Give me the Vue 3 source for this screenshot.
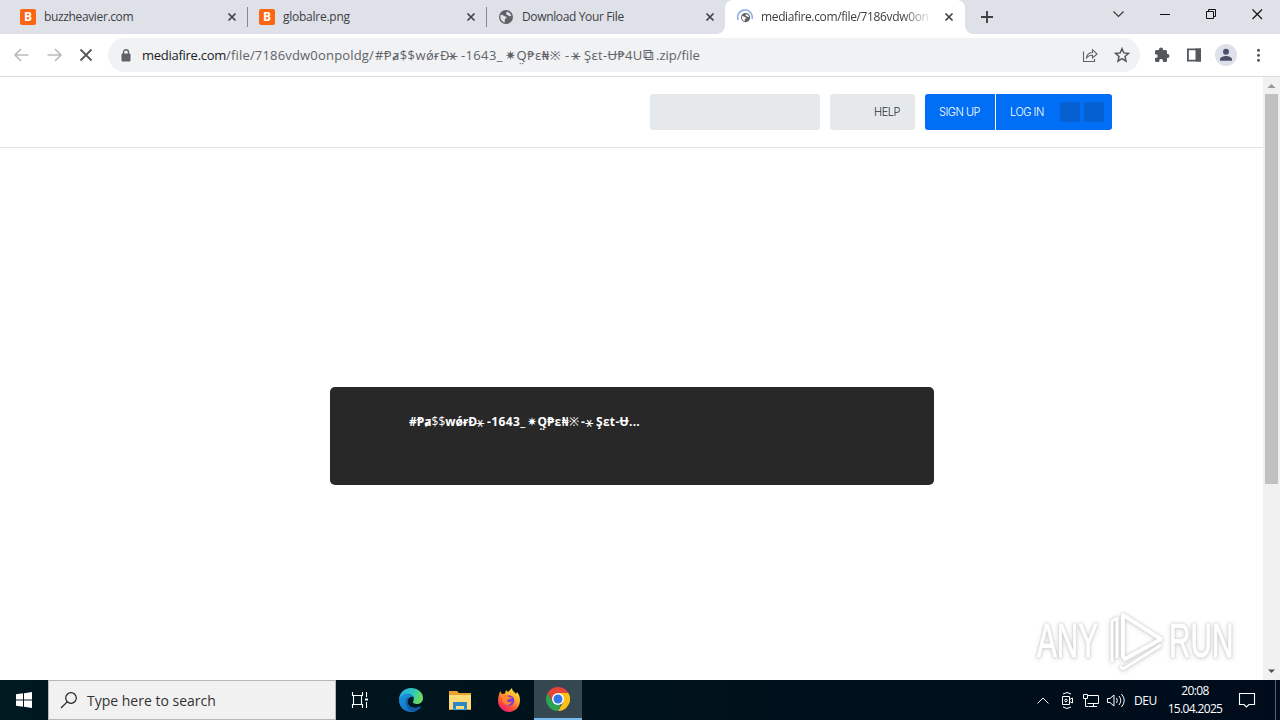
<script setup>
const tabs = [
  { title: 'buzzheavier.com', icon: 'b', cls: 't1' },
  { title: 'globalre.png', icon: 'b', cls: 't2' },
  { title: 'Download Your File', icon: 'globe', cls: 't3' },
  { title: 'mediafire.com/file/7186vdw0on', icon: 'load', cls: 't4' },
]
const globe = 'M8 1a7 7 0 1 0 0 14A7 7 0 0 0 8 1zM3 5.500c1 .2 2 .5 2.800 1.300.8.9 2.600.2 2.800 1.700.1 1.200-1.600 1-1.800 2.200-.1.900.2 1.800-.4 2.700A5.600 5.600 0 0 1 3 5.500zM9 2.600l3 1.700 1.300 2.400c-1 .8-2.300.4-3-.3-.8-.7-2.200-.6-2.300-1.600 0-.9.800-1.200 1-2.200z'
</script>

<template>
  <div class="screen">
    <div class="tabs">
      <div v-for="t in tabs" :key="t.title" class="tab" :class="t.cls">
        <span v-if="t.icon === 'b'" class="bicon">B</span>
        <svg v-else class="fav" viewBox="0 0 16 16">
          <path v-if="t.icon === 'globe'" :d="globe" fill="#5f6368" fill-rule="evenodd" />
          <g v-else>
            <path d="M1.200 11A7.300 7.300 0 1 1 15 10" fill="none" stroke="#8aaae5" stroke-width="1.500" />
            <path :d="globe" transform="translate(3.300 3.300) scale(.66)" fill="#5f6368" fill-rule="evenodd" />
          </g>
        </svg>
        <span class="title">{{ t.title }}</span>
        <svg class="close" viewBox="0 0 10 10"><path d="M1.500 1.500l7 7m0-7l-7 7" stroke="#3f4349" stroke-width="1.700" /></svg>
      </div>
      <svg class="plus" viewBox="0 0 14 14"><path d="M7 1v12M1 7h12" stroke="#3c4043" stroke-width="1.900" /></svg>
      <svg class="winctl" viewBox="0 0 160 34" fill="none" stroke="#111">
        <path d="M13.500 11.500l5 5 5-5" stroke="#333" stroke-width="1.100" />
        <path d="M60 14.500h10" />
        <path d="M106.500 11.500h7v7h-7zM108.500 11v-1.500h7v7H114" />
        <path d="M152.500 9.500l9.500 9.500m0-9.500L152.500 19" stroke-width="1.200" />
      </svg>
    </div>

    <div class="toolbar">
      <svg class="nav" viewBox="0 0 108 42" fill="none">
        <path d="M28.500 21H15.500M21 15l-6 6 6 6M47.500 21h13M55 15l6 6-6 6" stroke="#b9bbbe" stroke-width="1.700" />
        <path d="M80.500 15.500l11 11m0-11l-11 11" stroke="#54585c" stroke-width="1.800" />
      </svg>
      <div class="omni">
        <svg class="lock" viewBox="0 0 10 13"><path d="M1 5h8v7H1z" fill="#5f6368" stroke="#5f6368" stroke-linejoin="round" /><path d="M2.500 5V3.300a2.500 2.500 0 0 1 5 0V5" fill="none" stroke="#5f6368" stroke-width="1.400" /></svg>
        <div class="url">
          <span class="host">mediafire.com</span><span class="p1">/file/7186vdw0onpoldg/</span><span class="p2">#Ᵽⱥ$$wǿɍÐ</span><span class="ast">⚹</span><span class="p3">-1643_</span><span class="p4">✷Q̤₱ɛ₦※</span><span class="dash">-</span><span class="ast">⚹</span><span class="p5">Şɛt-Ʉ₱4U</span><span class="sq">⧉</span><span class="p6">.zip/file</span>
        </div>
        <svg class="share" viewBox="0 0 16 16" fill="none" stroke="#5f6368" stroke-width="1.100"><path d="M1.500 4.500v10h11v-2.500M4.500 11c.2-3.300 2.300-5.300 6-5.500V2.700L15 7l-4.500 4V8.300c-2.800 0-4.500.8-6 2.700z" /></svg>
        <svg class="star" viewBox="0 0 16 16"><path d="M8 1.700l1.800 4.200 4.700.5-3.500 3.100 1 4.600L8 11.700l-4 2.400 1-4.600-3.500-3.100 4.700-.5z" fill="none" stroke="#54585c" stroke-width="1.500" /></svg>
      </div>
      <svg class="ext" viewBox="0 0 108 42">
        <path d="M2 17.500q0-1.500 1.500-1.500H6v-.5a2 2 0 0 1 4 0v.5h2.500q1.500 0 1.500 1.500V20h.5a2 2 0 0 1 0 4H14v2.500q0 1.500-1.500 1.500H10v-1a1.900 1.900 0 0 0-3.800 0v1H3.500Q2 28 2 26.500V24h.8a1.900 1.900 0 0 0 0-3.800H2z" transform="translate(1 0)" fill="#54585c" />
        <path d="M35.900 15.400h12.200v11.200H35.900z" fill="none" stroke="#54585c" stroke-width="1.800" /><path d="M43.500 14.500H49v13h-5.500z" fill="#54585c" />
        <circle cx="74" cy="21" r="11" fill="#dee1e9" /><circle cx="74" cy="17.800" r="3" fill="#4b5069" /><path d="M68 26.800v-1.500c0-2 3.500-3.300 6-3.300s6 1.300 6 3.300v1.500z" fill="#4b5069" />
        <g fill="#54585c"><circle cx="106.500" cy="16.300" r="1.500" /><circle cx="106.500" cy="21.300" r="1.500" /><circle cx="106.500" cy="26.300" r="1.500" /></g>
      </svg>
    </div>

    <div class="content">
      <div class="page">
        <header>
          <div class="search"></div>
          <div class="help"><span>HELP</span></div>
          <div class="auth"><div class="signup"><span>SIGN UP</span></div><div class="login"><span>LOG IN</span><i></i><i></i></div></div>
        </header>
        <div class="card">
          <div class="file"><span class="f1">#Ᵽⱥ<b>$$</b>wǿɍÐ</span><span class="fa">⚹</span><span class="f2">-1643_</span><span class="f3">✷Q̤₱ɛ₦<b>※</b></span><span class="fd">-</span><span class="fa">⚹</span><span class="f4">Şɛt-Ʉ...</span></div>
        </div>
        <div class="mark">
          <span class="any">ANY</span>
          <svg viewBox="0 0 60 66" fill="none" stroke="#fff" stroke-width="4" stroke-linejoin="round">
            <path d="M6 54V13l5-3v40" stroke-width="3" />
            <path d="M17 50V7l38 24-38 21" />
            <path d="M14 58l3 3 38-24" stroke-width="3" />
          </svg>
          <span class="run">RUN</span>
        </div>
      </div>
      <div class="scroll">
        <svg viewBox="0 0 17 17"><path d="M4.500 11l4-4 4 4z" fill="#999" /></svg>
        <div class="thumb"></div>
        <svg class="down" viewBox="0 0 17 17"><path d="M5 6.500h7L8.500 10z" fill="#505050" /></svg>
      </div>
    </div>

    <div class="taskbar">
      <div class="start"><svg viewBox="0 0 16 16" fill="#fff"><path d="M0 2.200l7-.9v6.200H0zM8 1.200L16 0v7.500H8zM0 8.500h7v6.200l-7-.9zM8 8.500h8V16l-8-1.200z" /></svg></div>
      <div class="find"><svg viewBox="0 0 18 18" fill="none" stroke="#222" stroke-width="1.200"><circle cx="11" cy="7" r="5.300" /><path d="M7.200 10.800L1 17" /></svg><span>Type here to search</span></div>
      <div class="app"><svg viewBox="0 0 24 24" fill="none" stroke="#fff" stroke-width="1.100"><path d="M4.500 4v3.500h10V4M4.500 20v-3.500h10V20M5.500 7.500v9m8-9v9M18.500 4v5m0 5v6" /><path d="M17 10.500h3v2h-3z" fill="#fff" stroke="none" /></svg></div>
      <div class="app edge"><svg viewBox="0 0 24 24">
        <defs><linearGradient id="ea" x1="0" x2="1" y1="0" y2=".3"><stop offset="0" stop-color="#28a7e8" /><stop offset=".6" stop-color="#2bc6bd" /><stop offset="1" stop-color="#69dc61" /></linearGradient><linearGradient id="eb" x1="0" y1="0" x2="1" y2="1"><stop stop-color="#1998df" /><stop offset="1" stop-color="#0d61b3" /></linearGradient></defs>
        <path d="M0 12C0 5 5 0 12 0c7 0 12 4.500 12 10 0 4-3 6-6.500 6-3 0-4-1-3.500-2 1.500-2.500-.5-6.500-5-6.500-4 0-7.500 2-9 4.500z" fill="url(#ea)" />
        <path d="M0 12c1-4 4.500-6.500 8.500-6.500 3.500 0 6 2 6.500 4.500-4-1.500-6.500 1-6.500 4 0 4 5 6.500 9.500 5.500l4-1.500C20 22 16 24 12 24 5 24 0 19 0 12z" fill="url(#eb)" />
        <path d="M8 10c-3 4 0 11 5 13.500 4 .1 7.500-2 9.500-5-6 3.500-14 .5-14-5 0-1.500.5-2.600 1-3.500z" fill="#105aa5" />
        <path d="M14.500 9c-3.500-1-5.500 1.500-5.500 4.500 0 2.500 2 4.500 5 5.300 3 .7 6 .2 8-.8l.8-2.300c-2.500 1-7 .8-8.800-.7-.8-.7-.3-1.300.1-2.200.6-1.300.7-2.600.4-3.800z" fill="#001821" />
      </svg></div>
      <div class="app"><svg viewBox="0 0 24 24"><path d="M1 3h8l2 2h12v17H1z" fill="#e9a22d" /><path d="M1 7h22v14H1z" fill="#ffdc78" /><path d="M5 14h14v8h-3v-4H8v4H5z" fill="#2d87c5" /><path d="M4 21h16v1H4z" fill="#42a0db" /></svg></div>
      <div class="app"><svg viewBox="0 0 24 24">
        <defs><linearGradient id="fx" x1=".9" y1="0" x2=".3" y2="1"><stop offset="0" stop-color="#fff04a" /><stop offset=".4" stop-color="#ffad28" /><stop offset=".75" stop-color="#ff493e" /><stop offset="1" stop-color="#e91d76" /></linearGradient></defs>
        <path d="M3 3l2 3 3-.5L9 2l2 2 4-4c0 3 3 4 4 6l1-2c2 2 3 5 3 8.500C23 19 18 24 12 24S1 19 1 13c0-4 1-6 2-10z" fill="url(#fx)" /><circle cx="12" cy="12.500" r="5.300" fill="#803bd7" /><path d="M4 8c3-2 6-1 8 1l3 .5c-1 2-5 1-5 4 2 1 4 1 5-.5-1 5-7 5-9 1-1-2-1-4-2-6z" fill="#ff842b" />
      </svg></div>
      <div class="app active"><svg viewBox="0 0 24 24"><path d="M12 12V6h10.400A12 12 0 0 1 12 24l5.200-9z" fill="#fbc116" /><path d="M1.600 6l5.200 9 5.200 3 3-.5L12 24A12 12 0 0 1 1.600 6z" fill="#2fa152" /><path d="M12 6h10.400A12 12 0 0 0 1.600 6l5.200 9z" fill="#e64435" /><circle cx="12" cy="12" r="6" fill="#fff" /><circle cx="12" cy="12" r="4.500" fill="#3377e7" /></svg></div>
      <svg class="tray" viewBox="0 0 100 40" fill="none" stroke="#fff" stroke-width="1">
        <path d="M6.500 23.500L12 18l5.500 5.500" />
        <path d="M31.500 16.500h7v8h-7zM38.500 19.500l3-1.500v5l-3-1.500M32 14q4-3 8 0M32 27q4 3 8 0" /><circle cx="35" cy="20.500" r="1.300" />
        <path d="M56.500 15.500h11v8h-11M62.500 23.500v3M58 26.500h8M52.500 14.500h4v4h-4zM54.500 18.500v8h3" />
        <path d="M76.500 18.500H79l4-3.500v11l-4-3.500h-2.500zM85.500 18q1.700 2.500 0 5M88 16q3.500 4.500 0 9M90.500 14q5.500 6.500 0 13" />
      </svg>
      <span class="lang">DEU</span>
      <div class="clock"><span>20:08</span><span class="date">15.04.2025</span></div>
      <svg class="note" viewBox="0 0 18 18" fill="none" stroke="#fff" stroke-width="1.100"><path d="M1.500 2.500h15v11H11l-2.500 2.500L6 13.500H1.500z" /></svg>
    </div>
  </div>
</template>

<style>
body { margin: 0; overflow: hidden; }
</style>
<style scoped>
* { box-sizing: border-box; }
.screen { width: 1280px; height: 720px; display: flex; flex-direction: column; overflow: hidden; background: #fff; font-family: "Open Sans", "Noto Sans", "DejaVu Sans", sans-serif; }
svg { display: block; flex: none; }
span { white-space: pre; }
.tabs { height: 34px; background: #dee1e8; display: flex; flex: none; }
.tab { width: 239px; height: 34px; display: flex; align-items: center; padding: 0 11px 0 11px; position: relative; }
.t1 { width: 248px; padding-left: 20px; }
.t1::after, .t2::after { content: ""; position: absolute; right: 0; top: 7px; width: 1px; height: 20px; background: #85888e; }
.t3 { width: 238px; padding-right: 10px; }
.t4 { width: 240px; background: #fff; border-radius: 8px 8px 0 0; padding-left: 12px; }
.t4::before, .t4::after { content: ""; position: absolute; bottom: 0; width: 8px; height: 8px; }
.t4::before { left: -8px; background: radial-gradient(circle at 0 0, transparent 7.5px, #fff 8px); }
.t4::after { right: -8px; background: radial-gradient(circle at 100% 0, transparent 7.5px, #fff 8px); }
.bicon { width: 16px; height: 16px; background: #fb6510; border-radius: 2px; color: #fff; font: bold 12px/16px "Open Sans", sans-serif; text-align: center; }
.fav { width: 16px; height: 16px; }
.title { margin-left: 8px; flex: 1; font-size: 12px; line-height: 18px; color: #3c4043; letter-spacing: -.36px; }
.t2 .title { letter-spacing: -.25px; }
.t4 .title { flex: none; width: 170px; margin-right: 13px; letter-spacing: -.36px; -webkit-mask-image: linear-gradient(90deg, #000 140px, transparent 172px); mask-image: linear-gradient(90deg, #000 140px, transparent 172px); }
.close { width: 10px; height: 10px; }
.plus { width: 14px; height: 14px; margin: 10px 0 0 15px; }
.winctl { width: 160px; height: 34px; margin-left: 106px; overflow: visible; }
.toolbar { height: 43px; flex: none; display: flex; border-bottom: 1px solid #dadce0; }
.nav { width: 108px; height: 42px; }
.omni { width: 1032px; height: 34px; margin-top: 4px; border-radius: 17px; background: #f0f2f4; display: flex; align-items: center; padding-left: 13px; }
.lock { width: 10px; height: 13px; }
.url { display: flex; margin-left: 11px; width: 930px; font-size: 13px; line-height: 20px; color: #5f6368; }
.url span, .file span { flex: none; }
.host { width: 84px; color: #202124; letter-spacing: -.27px; }
.p1 { width: 149px; letter-spacing: .18px; } .p2 { width: 73px; letter-spacing: .4px; } .p3 { width: 44px; letter-spacing: .35px; } .p4 { width: 60px; letter-spacing: .5px; } .dash { width: 6px; } .p5 { width: 59px; letter-spacing: .3px; }
.ast { width: 13px; font-family: "DejaVu Sans", sans-serif; font-size: 16px; }
.sq { width: 13px; font-family: "DejaVu Sans", sans-serif; font-size: 15px; }
.share { width: 16px; height: 16px; margin-left: 10px; }
.star { width: 16px; height: 16px; margin-left: 16px; }
.ext { width: 108px; height: 42px; margin-left: 12px; overflow: visible; }
.content { height: 603px; flex: none; display: flex; }
.page { width: 1263px; display: flex; flex-direction: column; }
header { height: 71px; border-bottom: 1px solid #e1e4e7; display: flex; padding: 17px 0 0 650px; font: 300 11px/36px Inter, sans-serif; flex: none; }
.search { width: 170px; height: 36px; border-radius: 3px; background: #e6e9ec; margin-right: 10px; }
.help { width: 85px; height: 36px; border-radius: 3px; background: #e6e9ec; margin-right: 10px; color: #30343c; padding-left: 44px; letter-spacing: -.5px; }
.auth { display: flex; width: 187px; height: 36px; border-radius: 3px; background: #006ff5; color: #fff; overflow: hidden; letter-spacing: -.5px; }
.signup { width: 71px; padding-left: 14px; border-right: 1px solid #fff; }
.login { display: flex; align-items: center; padding-left: 14px; }
.login span { width: 50px; }
i { width: 20px; height: 20px; border-radius: 2px; background: #0560d1; margin-right: 4px; }
.card { width: 604px; height: 98px; margin: 239px 0 0 330px; border-radius: 5px; background: #282828; padding: 25px 0 0 79px; flex: none; }
.file { display: flex; color: #fff; font: bold 12px/20px "Open Sans", "Noto Sans", "DejaVu Sans", sans-serif; }
.file b { font-weight: 400; }
.f1 { width: 67px; } .f2 { width: 40px; letter-spacing: .4px; } .f3 { width: 54px; letter-spacing: .4px; } .fd { width: 4px; } .f4 { letter-spacing: .3px; }
.fa { width: 11px; font-family: "DejaVu Sans", sans-serif; font-size: 14px; font-weight: 400; }
.mark { display: flex; align-items: center; margin: 123px 0 0 1037px; height: 66px; filter: drop-shadow(0 0 1px #c4c4c4) drop-shadow(0 1px 2px #dcdcdc); }
.mark span { font: 48px/60px "Liberation Sans", sans-serif; color: #fff; -webkit-text-stroke: 1px #fff; transform-origin: 0 50%; transform: scaleX(.62); width: 66px; }
.mark svg { width: 60px; height: 66px; margin-left: 3px; margin-right: 3px; }
.scroll { width: 17px; background: #f1f1f1; display: flex; flex-direction: column; }
.scroll svg { width: 17px; height: 17px; }
.thumb { width: 13px; height: 390px; background: #c1c1c1; margin: 0 2px; }
.scroll .down { margin-top: auto; }
.taskbar { height: 40px; display: flex; align-items: center; color: #fff; background: linear-gradient(90deg, #001820, #00121c 50%, #000c1c); flex: none; position: relative; }
.taskbar::after { content: ""; position: absolute; right: 4px; top: 0; width: 1px; height: 40px; background: #59606b; }
.start { width: 48px; padding-left: 16px; }
.start svg { width: 16px; height: 16px; }
.find { width: 288px; height: 40px; border: 1px solid #b8b8b8; background: #f1f1f1; display: flex; align-items: center; padding-left: 11px; color: #333; font-size: 14px; }
.find svg { width: 18px; height: 18px; margin-right: 9px; }
.app { width: 48px; height: 40px; display: flex; align-items: center; justify-content: center; margin-right: 1px; }
.app svg { width: 24px; height: 24px; }
.edge { margin-left: 2px; }
.active { background: #354852; border-bottom: 2px solid #76b9ed; margin-right: 0; }
.tray { width: 100px; height: 40px; margin-left: auto; }
.lang { font-size: 12px; width: 30px; margin-left: 3px; letter-spacing: -.5px; }
.clock { width: 62px; display: flex; flex-direction: column; align-items: center; font-size: 12px; line-height: 18px; letter-spacing: -.6px; }
.date { letter-spacing: -.65px; }
.note { width: 18px; height: 18px; margin: 0 24px 0 12px; }
</style>
